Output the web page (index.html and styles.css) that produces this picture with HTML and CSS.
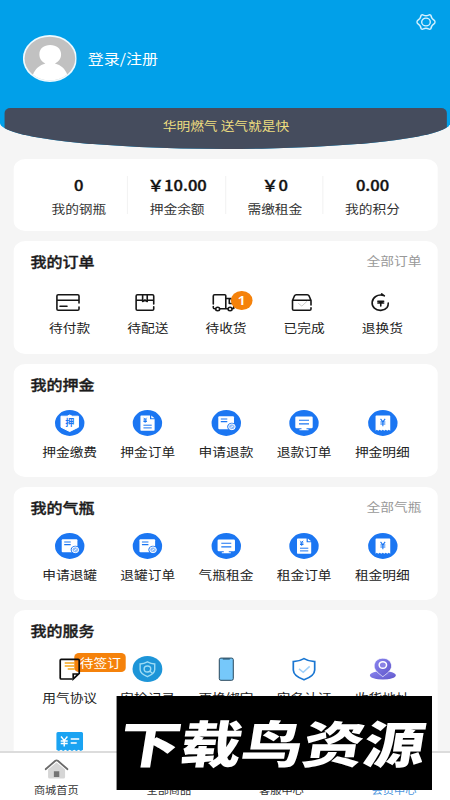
FILE: index.html
```html
<!DOCTYPE html>
<html lang="zh-CN">
<head>
<meta charset="utf-8">
<meta name="viewport" content="width=device-width, initial-scale=1">
<title>会员中心</title>
<link rel="stylesheet" href="styles.css">
</head>
<body>
<svg class="defs" aria-hidden="true">
  <symbol id="doc" viewBox="0 0 32 26" preserveAspectRatio="none">
    <ellipse cx="16" cy="13" rx="14.7" ry="12.9" fill="#1b76f2"/>
    <path d="M9.8 5.4h8.8v3.8h4.6v10.7q0 .8-.8.8H9.8q-.8 0-.8-.8V6.200q0-.8.8-.8z" fill="#fff"/>
    <path d="M19.800 5.400l3.400 2.900h-3.400z" fill="#fff"/>
    <path d="M12.200 7.800l1.500 1.600 1.500-1.600M12 10h3.500M12 11.500h3.500M13.700 9.400v3.400M12 15.200h8.300M12 17.900h8.300" fill="none" stroke="#1b76f2" stroke-width="1"/>
  </symbol>
  <symbol id="refund" viewBox="0 0 32 26" preserveAspectRatio="none">
    <ellipse cx="16" cy="13" rx="14.7" ry="12.9" fill="#1b76f2"/>
    <rect x="8" y="6.200" width="15.700" height="13" rx="1" fill="#fff"/>
    <path d="M10.500 9h6.500M10.500 11.600h6.500" stroke="#1b76f2" stroke-width="1.100"/>
    <ellipse cx="21.600" cy="16.800" rx="4.700" ry="4.100" fill="#1b76f2"/>
    <ellipse cx="21.600" cy="16.800" rx="3.300" ry="2.900" fill="#8dbbfa" stroke="#fff" stroke-width="1"/>
    <path d="M20.200 17.800l2.800-2" stroke="#fff" stroke-width=".9"/>
  </symbol>
  <symbol id="screen" viewBox="0 0 32 26" preserveAspectRatio="none">
    <ellipse cx="16" cy="13" rx="14.7" ry="12.9" fill="#1b76f2"/>
    <rect x="7.300" y="6.500" width="17.400" height="11.800" rx="1.200" fill="#fff"/>
    <path d="M13.500 18h5v1.300h2v1h-9v-1h2z" fill="#fff"/>
    <path d="M11 10.300h10M11 13.900h10" stroke="#1b76f2" stroke-width="1.100"/>
  </symbol>
  <symbol id="bill" viewBox="0 0 32 26" preserveAspectRatio="none">
    <ellipse cx="16" cy="13" rx="14.7" ry="12.9" fill="#1b76f2"/>
    <path d="M8.700 6.300q0-.9.900-.9h12.900q.9 0 .9.900v14.500l-1.500-1-1.500 1-1.500-1-1.500 1-1.500-1-1.500 1-1.500-1-1.500 1-1.500-1-1.200 1z" fill="#fff"/>
    <path d="M13.700 8.800l2.300 3 2.300-3M13.500 12h5M13.500 14h5M16 11.600v4.600" fill="none" stroke="#1b76f2" stroke-width="1.100"/>
  </symbol>
</svg>

<div class="page">
  <header class="hero">
    <svg class="gear" viewBox="0 0 20 18" preserveAspectRatio="none">
      <path d="M5.200 2.200C6 1.500 6.500 1.500 7.500 2.100Q10 3.400 12.500 2.100C13.500 1.500 14 1.500 14.800 2.200Q15.300 5.700 18.600 7.600Q19.500 9 18.600 10.400Q15.300 12.300 14.800 15.800C14 16.500 13.500 16.500 12.500 15.900Q10 14.600 7.500 15.900C6.500 16.500 6 16.500 5.200 15.800Q4.700 12.300 1.400 10.400Q.5 9 1.400 7.600Q4.700 5.700 5.200 2.200z"/>
      <ellipse cx="10" cy="9" rx="4.300" ry="3.900"/>
    </svg>
    <div class="user">
      <svg class="avatar" viewBox="0 0 54 47" preserveAspectRatio="none">
        <defs><clipPath id="face"><ellipse cx="27" cy="23.500" rx="25.300" ry="21.800"/></clipPath></defs>
        <ellipse cx="27" cy="23.500" rx="27" ry="23.500" fill="#eefaff"/>
        <g clip-path="url(#face)">
          <path d="M0 0h54v47H0z" fill="#c1c1c1"/>
          <path d="M16.500 19.500C16.500 13.500 21 10 27.300 10S38.200 13.500 38.200 19.500C38.200 24 35.500 26.500 32 28.500C38 30 42.500 34 44.500 40V47H10V40C12 34 17 30 22.500 28.500C19 26.500 16.500 24 16.500 19.500z" fill="#fff"/>
        </g>
      </svg>
      <span class="login">登录/注册</span>
    </div>
    <div class="slogan">华明燃气 送气就是快</div>
  </header>

  <main class="cards">
    <section class="card stats">
      <div class="stat"><b>0</b><span>我的钢瓶</span></div>
      <div class="stat"><b>￥10.00</b><span>押金余额</span></div>
      <div class="stat"><b>￥0</b><span>需缴租金</span></div>
      <div class="stat"><b>0.00</b><span>我的积分</span></div>
    </section>

    <section class="card orders">
      <div class="head"><h2>我的订单</h2><a>全部订单</a></div>
      <div class="grid">
        <div class="item">
          <svg class="icon line" viewBox="0 0 32 26" preserveAspectRatio="none"><path d="M25.300 13V6q0-1.300-1.300-1.300H4.500Q3.200 4.700 3.200 6v13q0 1.300 1.300 1.300H24q1.300 0 1.300-1.300v-2M3.200 10.200h22.100M6.300 16.300h7"/></svg>
          <span>待付款</span>
        </div>
        <div class="item">
          <svg class="icon line" viewBox="0 0 32 26" preserveAspectRatio="none"><path d="M22.300 14V6q0-1.300-1.300-1.300H6Q4.700 4.700 4.700 6v13q0 1.300 1.300 1.300h15q1.300 0 1.300-1.300v-2.200M4.700 10.300h6.500M15.800 10.300h6.500M11.200 4.700v6.800l2.300-1.500 2.300 1.500V4.700"/></svg>
          <span>待配送</span>
        </div>
        <div class="item">
          <svg class="icon line" viewBox="0 0 32 26" preserveAspectRatio="none"><path d="M3 14V6q0-1.300 1.300-1.300h10.200q1 0 1 1v13.100H10M3 16.500v1q0 1.300 1.500 1.300M15.500 8.500h5l3 4v6h-1.500M19 9.500v4h4M15.500 18.800h2"/><ellipse cx="7.400" cy="19" rx="2" ry="1.700"/><ellipse cx="19.800" cy="19" rx="2" ry="1.700"/></svg>
          <i class="badge">1</i>
          <span>待收货</span>
        </div>
        <div class="item">
          <svg class="icon line" viewBox="0 0 32 26" preserveAspectRatio="none"><path d="M23 15v-4.500l-2-4.700q-.5-1.100-1.700-1.100H8.200Q7 4.700 6.500 5.800l-2 4.700V19q0 1.300 1.300 1.300h15.900q1.300 0 1.300-1.300v-1.300M4.500 10.200H23"/><path class="faint" d="M10.500 13.500l3.300 2.600 5-4.600"/></svg>
          <span>已完成</span>
        </div>
        <div class="item">
          <svg class="icon line" viewBox="0 0 32 26" preserveAspectRatio="none"><path d="M17.500 5.800Q12.500 4 8.800 6.500C4.600 9.200 4.100 15 7.500 18.200S17.500 21 20.200 17.500Q21.500 15.700 21.400 13M14.800 3.900l2.700 1.900"/><path d="M11 11.200h5.800M11 13h5.800M13.900 13v3M12.200 11.500l1.700 1.500 1.700-1.500"/></svg>
          <span>退换货</span>
        </div>
      </div>
    </section>

    <section class="card">
      <div class="head"><h2>我的押金</h2></div>
      <div class="grid">
        <div class="item">
          <svg class="icon" viewBox="0 0 32 26" preserveAspectRatio="none"><ellipse cx="16" cy="13" rx="14.700" ry="12.900" fill="#1b76f2"/><path d="M16 5l2.500 1.200h6.200v11L16 21.500l-8.700-4.300v-11h6.200z" fill="#fff" stroke="#fff" stroke-linejoin="round"/><text x="16" y="16.300" text-anchor="middle" font-size="9" font-weight="700" fill="#1b76f2">押</text></svg>
          <span>押金缴费</span>
        </div>
        <div class="item"><svg class="icon"><use href="#doc"/></svg><span>押金订单</span></div>
        <div class="item"><svg class="icon"><use href="#refund"/></svg><span>申请退款</span></div>
        <div class="item"><svg class="icon"><use href="#screen"/></svg><span>退款订单</span></div>
        <div class="item"><svg class="icon"><use href="#bill"/></svg><span>押金明细</span></div>
      </div>
    </section>

    <section class="card">
      <div class="head"><h2>我的气瓶</h2><a>全部气瓶</a></div>
      <div class="grid">
        <div class="item"><svg class="icon"><use href="#refund"/></svg><span>申请退罐</span></div>
        <div class="item"><svg class="icon"><use href="#refund"/></svg><span>退罐订单</span></div>
        <div class="item"><svg class="icon"><use href="#screen"/></svg><span>气瓶租金</span></div>
        <div class="item"><svg class="icon"><use href="#doc"/></svg><span>租金订单</span></div>
        <div class="item"><svg class="icon"><use href="#bill"/></svg><span>租金明细</span></div>
      </div>
    </section>

    <section class="card services">
      <div class="head"><h2>我的服务</h2></div>
      <div class="grid">
        <div class="item">
          <i class="tag">待签订</i>
          <svg class="icon note" viewBox="0 0 32 26" preserveAspectRatio="none"><path d="M18.500 23H7.500Q6.500 23 6.500 22V4.500Q6.500 3.300 7.500 3.300h17q1 0 1 1V17.500l-6 5.500V18h5" fill="none" stroke="#0b0b0b" stroke-width="1.700"/><path d="M11 6.900h10M11 9.900h10M14 12.900h7" stroke="#f5a61d" stroke-width="1.500"/></svg>
          <span>用气协议</span>
        </div>
        <div class="item">
          <svg class="icon" viewBox="0 0 32 26" preserveAspectRatio="none"><ellipse cx="16" cy="13" rx="14.900" ry="13" fill="#1d95d8"/><g fill="none" stroke="#9edcf5" stroke-width="1.400"><path d="M16 5.800Q19.500 7.800 23.300 8v5.500q0 4-7.300 7.200Q8.700 17.500 8.700 13.500V8Q12.500 7.800 16 5.800z"/><ellipse cx="16" cy="13" rx="3.300" ry="3"/><path d="M18.200 15l3 2.500"/></g></svg>
          <span>安检记录</span>
        </div>
        <div class="item">
          <svg class="icon" viewBox="0 0 32 26" preserveAspectRatio="none"><rect x="9" y="2.100" width="14" height="22.200" rx="1.600" fill="#76c8fa" stroke="#27465a" stroke-width="1"/><path d="M12.500 2.500h7v1h-7z" fill="#27465a"/></svg>
          <span>更换绑定</span>
        </div>
        <div class="item">
          <svg class="icon" viewBox="0 0 32 26" preserveAspectRatio="none"><path d="M16 2.600Q20.500 5.400 26.700 5.600V14Q26.500 20 16 23.800Q5.500 20 5.300 14V5.600Q11.500 5.400 16 2.600z" fill="#fff" stroke="#1976d2" stroke-width="1.700"/><path d="M11 12.800l4.200 3.500 6.500-6" fill="none" stroke="#9fd0fa" stroke-width="1.600"/></svg>
          <span>实名认证</span>
        </div>
        <div class="item">
          <svg class="icon" viewBox="0 0 32 26" preserveAspectRatio="none"><defs><linearGradient id="pin" x1="0" y1="0" x2="1" y2="1"><stop offset="0" stop-color="#8a86f0"/><stop offset="1" stop-color="#5f55c9"/></linearGradient></defs><ellipse cx="16" cy="19.300" rx="13" ry="4.300" fill="url(#pin)"/><path d="M16 20.700C12 17.500 7.300 14.500 7.300 10C7.300 5.500 11 2.200 16 2.200S24.700 5.500 24.700 10C24.700 14.500 20 17.500 16 20.700z" fill="url(#pin)" stroke="#fff" stroke-width=".7"/><ellipse cx="16" cy="9" rx="3.700" ry="3.300" fill="#8b83e5" stroke="#fff" stroke-width="1.500"/></svg>
          <span>收货地址</span>
        </div>
        <div class="item">
          <svg class="icon" viewBox="0 0 32 26" preserveAspectRatio="none"><path d="M2.700 4.500q0-1.500 1.500-1.500h23.600q1.500 0 1.500 1.500v16.200l-2.200 1.300-2.200-1.300-2.200 1.300-2.200-1.300-2.200 1.300-2.200-1.300-2.200 1.300-2.200-1.300-2.200 1.300-2.200-1.300-2.200 1.300-2.400-1.300z" fill="#1aa3f2"/><path d="M7.300 7.500l3.200 4 3.200-4M7 12h7M7 14.500h7M10.500 11.500v6M17 10h8.500M17 14h6" fill="none" stroke="#fff" stroke-width="1.400"/></svg>
        </div>
      </div>
    </section>
  </main>

  <nav class="tabs">
    <div class="tab">
      <svg class="house" viewBox="0 0 24 20" preserveAspectRatio="none"><path d="M3.500 10.500L12 3.500l8.500 7V18q0 1.500-1.500 1.500H5Q3.500 19.500 3.500 18z" fill="#d6d6d6"/><path d="M1 10.200L10.800 1.800q1.200-.9 2.400 0L23 10.200" fill="none" stroke="#6b6b6b" stroke-width="1.800" stroke-linecap="round"/><path d="M9.300 12.300h5.400v5.700H9.300z" fill="#737373"/></svg>
      <span>商城首页</span>
    </div>
    <div class="tab"><span>全部商品</span></div>
    <div class="tab"><span>客服中心</span></div>
    <div class="tab active"><span>会员中心</span></div>
  </nav>

  <div class="banner"><span>下载鸟资源</span></div>
</div>
</body>
</html>
```
FILE: styles.css
```css
* { box-sizing: border-box; }

html, body {
  margin: 0;
  height: 800px;
  overflow: hidden;
  background: #f5f5f5;
}

/* The interface is laid out on a narrower canvas and widened horizontally. */
.page {
  position: relative;
  display: flex;
  flex-direction: column;
  width: 393.75px;
  height: 800px;
  overflow: hidden;
  transform: scaleX(1.142857);
  transform-origin: 0 0;
  background: #f5f5f5;
  color: #333;
  font: 12px/16px "Noto Sans CJK SC", "Noto Sans", sans-serif;
}

.defs { position: absolute; width: 0; height: 0; }

.hero {
  position: relative;
  flex: none;
  height: 149px;
  padding-top: 35px;
  overflow: hidden;
  background: #01a0e9;
  border-radius: 0 0 50% 50% / 0 0 26px 26px;
}

.gear {
  position: absolute;
  top: 13px;
  right: 12px;
  width: 17.5px;
  height: 18px;
  fill: none;
  stroke: #d5f1ff;
  stroke-width: 1.4;
}

.user {
  display: flex;
  align-items: center;
  gap: 10px;
  height: 47px;
  padding-left: 19.5px;
}

.avatar { width: 47.3px; height: 47px; }

.login { padding-bottom: 2px; color: #fff; font-size: 14px; line-height: 20px; }

.slogan {
  height: 41px;
  margin: 26px 2.5px 0 4.2px;
  border-radius: 5px 5px 0 0;
  background: #454c5d;
  color: #efdf80;
  text-align: center;
  line-height: 36px;
}

.cards {
  display: flex;
  flex: 1;
  min-height: 0;
  flex-direction: column;
  gap: 10px;
  padding: 10px 10.5px 0 12.25px;
  overflow: hidden;
}

.card {
  flex: none;
  height: 113px;
  padding: 0 14.5px;
  border-radius: 10px;
  background: #fff;
}

.stats {
  display: grid;
  grid-template-columns: repeat(4, 1fr);
  height: 72px;
  padding-top: 17px;
}

.stat {
  display: flex;
  flex-direction: column;
  align-items: center;
  gap: 7px;
  height: 38px;
  margin-left: -1px;
}

.stat + .stat { border-left: 1px solid #f3f3f3; }

.stat b {
  color: #111;
  font-size: 14.5px;
  font-weight: 500;
  line-height: 18px;
  -webkit-text-stroke: .35px #111;
}

.head {
  display: flex;
  align-items: center;
  justify-content: space-between;
  height: 41px;
  padding-bottom: 2px;
}

.head h2 {
  margin: 0;
  color: #1b1b1b;
  font-size: 14px;
  font-weight: 500;
  line-height: 20px;
  -webkit-text-stroke: .35px #1b1b1b;
}

.head a { padding-top: 1px; color: #999; }

.grid {
  display: grid;
  grid-template-columns: repeat(5, 1fr);
  grid-auto-rows: 73px;
  padding-top: 5px;
}

.item {
  position: relative;
  display: flex;
  flex-direction: column;
  align-items: center;
  gap: 8px;
  color: #222;
  white-space: nowrap;
}

.orders .grid { padding-top: 8px; }
.orders .item { gap: 4px; }

.icon { display: block; flex: none; width: 28px; height: 26px; overflow: visible; }

.line { fill: none; stroke: #161616; stroke-width: 1.6; stroke-linejoin: round; stroke-linecap: round; }
.line .faint { stroke: #ccc; stroke-width: 1; }

.badge {
  position: absolute;
  top: 1px;
  left: 38.7px;
  width: 18.5px;
  height: 19px;
  border-radius: 50%;
  background: #f5820b;
  color: #fff;
  font: 600 13px/19px "Noto Sans", sans-serif;
  text-align: center;
}

.services { height: 200px; border-radius: 10px 10px 0 0; }

.tag {
  position: absolute;
  top: -3px;
  left: 38px;
  z-index: 1;
  width: 45.5px;
  height: 19px;
  padding-left: 5px;
  border-radius: 4px;
  background: #f5820b;
  color: #fff;
  font-size: 12px;
  font-style: normal;
  line-height: 19px;
}

.note { position: relative; z-index: 2; }

.tabs {
  display: grid;
  flex: none;
  grid-template-columns: repeat(4, 98.5px);
  height: 49px;
  border-top: 2px solid #dcdcdc;
  background: #fff;
  color: #333;
  font-size: 9.8px;
  line-height: 14px;
}

.tab {
  display: flex;
  flex-direction: column;
  align-items: center;
  justify-content: flex-end;
  gap: 4px;
  padding-bottom: 3px;
}

.house { width: 21px; height: 20px; }
.tab.active { color: #4a94dc; }

.banner {
  position: absolute;
  top: 696px;
  left: 102.4px;
  z-index: 5;
  display: flex;
  align-items: center;
  justify-content: center;
  width: 275.6px;
  height: 94px;
  background: #000;
  color: #fff;
  font-size: 50px;
  font-weight: 900;
  line-height: 90px;
  white-space: nowrap;
}

.banner span {
  margin-bottom: 4px;
  transform: translateX(-1px) skewX(-8deg) scaleX(1.07);
}
```
